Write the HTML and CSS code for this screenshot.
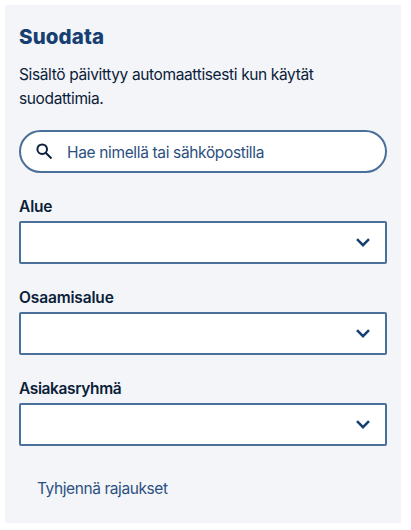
FILE: index.html
```html
<!DOCTYPE html>
<html lang="fi">

<head>
    <meta charset="UTF-8">
    <meta name="viewport" content="width=device-width, initial-scale=1.0">
    <title>Suodata</title>
    <link rel="stylesheet" href="styles.css">
</head>

<body>

    <form class="filters">
        <h2 class="filters-title">Suodata</h2>
        <p class="filters-info">Sisältö päivittyy automaattisesti kun käytät suodattimia.</p>

        <div class="search">
            <svg class="search-icon" viewBox="0 0 17 17" aria-hidden="true">
                <circle cx="6.2" cy="6.2" r="4.8" />
                <path d="M9.7 9.7L15.5 15.5" />
            </svg>
            <input type="text" class="search-input" name="haku" placeholder="Hae nimellä tai sähköpostilla">
        </div>

        <div class="field">
            <label class="field-label" for="alue">Alue</label>
            <div class="select">
                <select id="alue" name="alue"></select>
                <svg class="chevron" viewBox="0 0 14 9" aria-hidden="true"><path d="M1 1.2L7 7.2L13 1.2" /></svg>
            </div>
        </div>

        <div class="field">
            <label class="field-label" for="osaamisalue">Osaamisalue</label>
            <div class="select">
                <select id="osaamisalue" name="osaamisalue"></select>
                <svg class="chevron" viewBox="0 0 14 9" aria-hidden="true"><path d="M1 1.2L7 7.2L13 1.2" /></svg>
            </div>
        </div>

        <div class="field">
            <label class="field-label field-label-long" for="asiakasryhma">Asiakasryhmä</label>
            <div class="select">
                <select id="asiakasryhma" name="asiakasryhma"></select>
                <svg class="chevron" viewBox="0 0 14 9" aria-hidden="true"><path d="M1 1.2L7 7.2L13 1.2" /></svg>
            </div>
        </div>

        <button type="reset" class="clear">Tyhjennä rajaukset</button>
    </form>

</body>

</html>
```

FILE: styles.css
```css
* {
    box-sizing: border-box;
}

body {
    margin: 0;
    padding: 5px;
    background-color: #fff;
    font-family: Inter, "Liberation Sans", sans-serif;
    font-size: 15.5px;
    color: #0b2138;
}

.filters {
    width: 395.5px;
    height: 518px;
    padding: 17px 14px 0;
    background-color: #f3f5f9;
}

.filters-title {
    margin: 0;
    font-size: 20.5px;
    line-height: 30px;
    font-weight: 800;
    letter-spacing: 0.1px;
    color: #173f70;
}

.filters-info {
    margin: 11px 0 19px;
    line-height: 24px;
    letter-spacing: -0.37px;
}

.search {
    display: flex;
    align-items: center;
    height: 43px;
    padding: 0 15px;
    border: 2px solid #4a6f99;
    border-radius: 22px;
    background-color: #fff;
}

.search-icon {
    width: 17px;
    height: 17px;
    fill: none;
    stroke: #0b2138;
    stroke-width: 2;
}

.search-input {
    flex: 1;
    margin: 0 0 0 14px;
    padding: 2px 0 0;
    border: 0;
    outline: 0;
    background: none;
    font: inherit;
    letter-spacing: -0.35px;
    color: #173f70;
}

.search-input::placeholder {
    color: #2b5080;
    opacity: 1;
}

.field {
    height: 91px;
    padding-top: 23px;
}

.field-label {
    display: block;
    line-height: 22px;
    margin-bottom: 3px;
    font-weight: 600;
    letter-spacing: -0.15px;
}

.field-label-long {
    letter-spacing: -0.38px;
}

.select {
    position: relative;
}

.select select {
    display: block;
    width: 100%;
    height: 43px;
    border: 2px solid #4a6f99;
    border-radius: 2px;
    background-color: #fff;
    appearance: none;
}

.chevron {
    position: absolute;
    top: 17px;
    right: 16.5px;
    width: 14px;
    height: 9px;
    fill: none;
    stroke: #173f70;
    stroke-width: 2.5;
    pointer-events: none;
}

.clear {
    margin: 31px 0 0 18px;
    padding: 0;
    border: 0;
    background: none;
    font: inherit;
    line-height: 24px;
    letter-spacing: -0.42px;
    color: #2b5080;
    cursor: pointer;
}
```
